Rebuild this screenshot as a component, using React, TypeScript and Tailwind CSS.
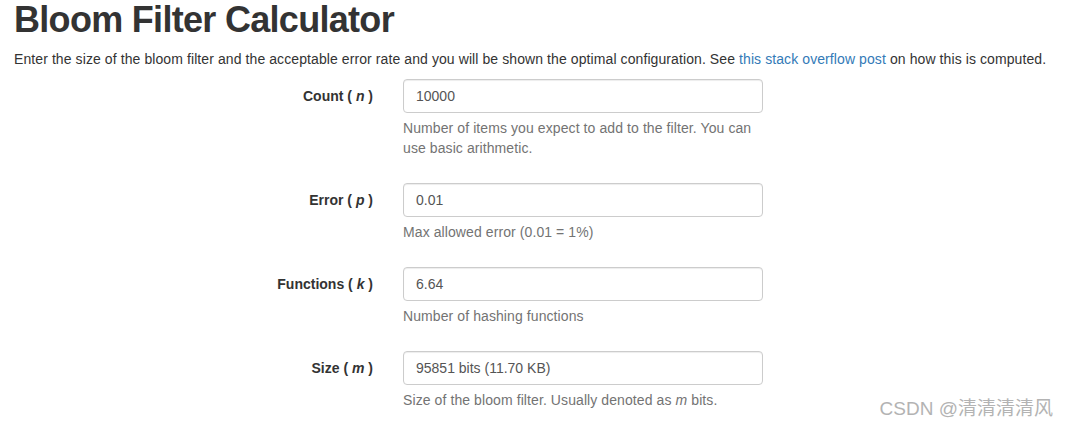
import React from 'react';

const FIELDS: { label: string; sym: string; value: string; help: React.ReactNode }[] = [
    { label: 'Count', sym: 'n', value: '10000', help: 'Number of items you expect to add to the filter. You can use basic arithmetic.' },
    { label: 'Error', sym: 'p', value: '0.01', help: 'Max allowed error (0.01 = 1%)' },
    { label: 'Functions', sym: 'k', value: '6.64', help: 'Number of hashing functions' },
    { label: 'Size', sym: 'm', value: '95851 bits (11.70 KB)', help: <>Size of the bloom filter. Usually denoted as <i>m</i> bits.</> },
];

export default function App() {
    return (
        <div className="relative w-[1069px] h-[429px] overflow-hidden bg-white text-[#333] px-[14px]" style={{ fontFamily: '"Liberation Sans", Arial, sans-serif' }}>
            <h1 className="text-[36px] leading-[1.1] font-bold tracking-[-0.7px] mb-[9px] text-[#333]">Bloom Filter Calculator</h1>
            <p className="text-[14px] leading-[20px] mb-[10px] whitespace-nowrap tracking-[0.09px]">
                Enter the size of the bloom filter and the acceptable error rate and you will be shown the optimal configuration. See{' '}
                <a className="text-[#337ab7]" href="#">this stack overflow post</a> on how this is computed.
            </p>

            <div className="flex flex-col">
                {FIELDS.map(f => (
                    <div key={f.label} className="flex gap-[30px] mb-[15px]">
                        <label className="w-[359px] text-right pt-[7px] text-[14px] leading-[20px] font-bold">
                            {f.label} ( <i>{f.sym}</i> )
                        </label>
                        <div className="w-[360px]">
                            <input readOnly value={f.value}
                                className="w-full h-[34px] px-[12px] py-[6px] text-[14px] leading-[20px] text-[#555] border border-[#ccc] rounded-[4px] shadow-[inset_0_1px_1px_rgba(0,0,0,0.075)] outline-none" />
                            <p className="mt-[5px] mb-[10px] text-[14px] leading-[20px] tracking-[0.09px] text-[#737373]">{f.help}</p>
                        </div>
                    </div>
                ))}
            </div>

            <div className="absolute right-[16px] top-[397px] text-[19px] leading-[24px] text-[#b3b3b3]" style={{ fontFamily: '"Liberation Sans", "Noto Sans CJK SC", sans-serif' }}>
                CSDN @清清清清风
            </div>
        </div>
    );
}
